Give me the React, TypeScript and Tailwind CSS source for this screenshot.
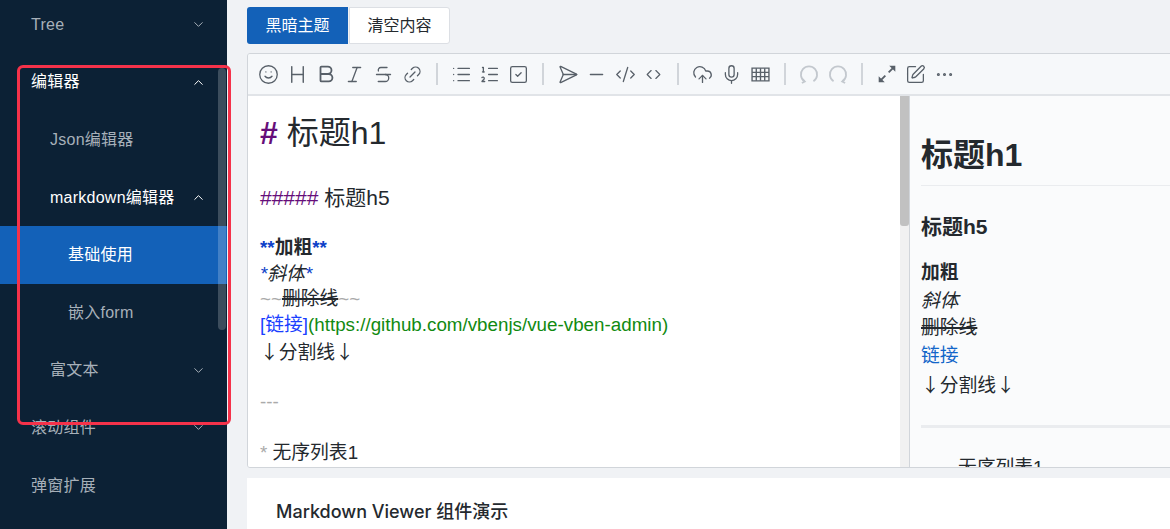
import React from 'react'
import {
  ChevronDown,
  ChevronUp,
  Smile,
  Heading,
  Bold,
  Italic,
  Strikethrough,
  Link2,
  List,
  ListOrdered,
  SquareCheck,
  Send,
  Minus,
  CodeXml,
  ChevronsLeftRight,
  CloudUpload,
  Mic,
  SquarePen,
  Ellipsis,
} from 'lucide-react'

const FONT = "font-['Liberation_Sans','Noto_Sans_CJK_SC',sans-serif]"

const menu = [
  { label: 'Tree', arrow: 'down', indent: 'pl-[31px]', tone: 'text-[#a7b0b9]' },
  { label: '编辑器', arrow: 'up', indent: 'pl-[31px]', tone: 'text-white' },
  { label: 'Json编辑器', indent: 'pl-[50px]', tone: 'text-[#a7b0b9]' },
  { label: 'markdown编辑器', arrow: 'up', indent: 'pl-[50px]', tone: 'text-white' },
  { label: '基础使用', indent: 'pl-[68px]', tone: 'text-white bg-[#1361b8]' },
  { label: '嵌入form', indent: 'pl-[68px]', tone: 'text-[#a7b0b9]' },
  { label: '富文本', arrow: 'down', indent: 'pl-[50px]', tone: 'text-[#a7b0b9]' },
  { label: '滚动组件', arrow: 'down', indent: 'pl-[31px]', tone: 'text-[#a7b0b9]' },
  { label: '弹窗扩展', indent: 'pl-[31px]', tone: 'text-[#a7b0b9]' },
]

function Arc({ flip }: { flip?: boolean }) {
  return (
    <svg width="20" height="20" viewBox="0 0 18 18" fill="none" stroke="#c3c8ce" strokeWidth="1.6" className={flip ? '-scale-x-100' : ''}>
      <path d="M5 15.5A7.3 7.3 0 1 1 13 15.5" />
      <path d="M2.8 13.5l2.4 2.2 -2.6 1.4" />
    </svg>
  )
}

function ExpandIcon() {
  return (
    <svg width="20" height="20" viewBox="0 0 18 18" fill="#586069" stroke="#586069">
      <path d="M10.5 7.5L15 3" strokeWidth="1.7" />
      <path d="M11 1.5h5.5V7z" stroke="none" />
      <path d="M7.5 10.5L3 15" strokeWidth="1.7" />
      <path d="M7 16.5H1.5V11z" stroke="none" />
    </svg>
  )
}

function TableIcon() {
  return (
    <svg width="19" height="19" viewBox="0 0 18 18" fill="none" stroke="#586069" strokeWidth="1.3">
      <path d="M1 3h16v12H1z" />
      <path d="M1 7h16M1 11h16M5 3v12M9 3v12M13 3v12" />
    </svg>
  )
}

function Tool({ children }: { children: React.ReactNode }) {
  return <div className="w-[28.8px] h-[41px] flex items-center justify-center shrink-0 text-[#586069]">{children}</div>
}

function Sep() {
  return <div className="w-[2px] h-[22px] mx-[9px] bg-[#d1d5da] shrink-0" />
}

function Toolbar() {
  const p = { size: 21, strokeWidth: 1.5 }
  return (
    <div className="h-[40px] pl-[6px] flex items-center bg-[#f6f8fa] border-b-2 border-[#e1e4e8] box-content">
      <Tool><Smile {...p} /></Tool>
      <Tool><Heading {...p} size={23} /></Tool>
      <Tool><Bold {...p} size={22} strokeWidth={2} /></Tool>
      <Tool><Italic {...p} /></Tool>
      <Tool><Strikethrough {...p} /></Tool>
      <Tool><Link2 {...p} className="-rotate-45" /></Tool>
      <Sep />
      <Tool><List {...p} /></Tool>
      <Tool><ListOrdered {...p} /></Tool>
      <Tool><SquareCheck {...p} /></Tool>
      <Sep />
      <Tool><Send {...p} className="rotate-45 -translate-x-[3px]" /></Tool>
      <Tool><Minus {...p} /></Tool>
      <Tool><CodeXml {...p} /></Tool>
      <Tool><ChevronsLeftRight {...p} size={19} /></Tool>
      <Sep />
      <Tool><CloudUpload {...p} /></Tool>
      <Tool><Mic {...p} /></Tool>
      <Tool><TableIcon /></Tool>
      <Sep />
      <Tool><Arc /></Tool>
      <Tool><Arc flip /></Tool>
      <Sep />
      <Tool><ExpandIcon /></Tool>
      <Tool><SquarePen {...p} /></Tool>
      <Tool><Ellipsis {...p} /></Tool>
    </div>
  )
}

function Arrow() {
  return <span className="font-['Noto_Sans_CJK_SC',sans-serif]">↓</span>
}

function Source() {
  return (
    <div className="w-[652px] shrink-0 bg-white pl-3 pt-[12px] text-[18.8px] leading-[25.6px] text-[#24292e] overflow-hidden">
      <div className="text-[32px] leading-[51px]"><span className="text-[#660e7a] font-bold">#</span> 标题h1</div>
      <div className="h-[25.6px]" />
      <div className="h-[25px] text-[21px]"><span className="text-[#660e7a]">#####</span> 标题h5</div>
      <div className="h-[25.6px]" />
      <div className="h-[25.6px] font-bold"><span className="text-[#0d3fc8]">**</span>加粗<span className="text-[#0d3fc8]">**</span></div>
      <div className="h-[25.6px] italic"><span className="text-[#0d3fc8]">*</span>斜体<span className="text-[#0d3fc8]">*</span></div>
      <div className="h-[25.6px]"><span className="text-[#aaaaaa]">~~</span><span className="line-through decoration-[1.5px]">删除线</span><span className="text-[#aaaaaa]">~~</span></div>
      <div className="h-[25.6px]"><span className="text-[#1a3fff]">[链接]</span><span className="text-[#118a11]">(https://github.com/vbenjs/vue-vben-admin)</span></div>
      <div className="h-[25.6px]"><Arrow />分割线<Arrow /></div>
      <div className="h-[25.6px]" />
      <div className="h-[25.6px] text-[#aaaaaa]">---</div>
      <div className="h-[25.6px]" />
      <div className="h-[25.6px]"><span className="text-[#aaaaaa]">*</span> 无序列表1</div>
    </div>
  )
}

function Preview() {
  return (
    <div className="flex-1 bg-[#fafbfc] border-l border-[#d1d5da] pl-[11px] pt-[39px] text-[18.8px] leading-[27.7px] text-[#24292e] overflow-hidden">
      <div className="text-[32px] leading-[41px] font-bold pb-[9px] border-b border-[#eaecef]">标题h1</div>
      <div className="text-[21px] leading-[26px] font-bold mt-[28px]">标题h5</div>
      <div className="mt-[19px]">
        <div className="h-[27.7px] font-bold">加粗</div>
        <div className="h-[27.7px] italic">斜体</div>
        <div className="h-[27.7px]"><span className="line-through decoration-[1.5px]">删除线</span></div>
        <div className="h-[27.7px] text-[#1366c9]">链接</div>
        <div className="h-[27.7px]"><Arrow />分割线<Arrow /></div>
      </div>
      <div className="h-[3px] bg-[#eaecef] mt-[28px]" />
      <div className="pl-[37px] mt-[26px]">无序列表1</div>
    </div>
  )
}

export default function App() {
  return (
    <div className={`${FONT} relative w-[1170px] h-[529px] overflow-hidden flex bg-[#f0f2f5]`}>
      <aside className="w-[227px] shrink-0 bg-[#0c2135] -mt-[4px]">
        {menu.map(m => (
          <div key={m.label} className={`h-[57.6px] flex items-center justify-between pr-[21px] text-[16px] tracking-[0.25px] ${m.indent} ${m.tone}`}>
            <span>{m.label}</span>
            {m.arrow === 'down' && <ChevronDown size={15} strokeWidth={1.6} />}
            {m.arrow === 'up' && <ChevronUp size={15} strokeWidth={1.6} />}
          </div>
        ))}
      </aside>

      <main className="flex-1 min-w-0 pl-[20px] pt-[7px] flex flex-col">
        <div className="flex gap-px h-[37px]">
          <button className="w-[101px] rounded-l-[3px] bg-[#1361b8] text-white text-[16px]">黑暗主题</button>
          <button className="w-[101px] rounded-r-[3px] bg-white border border-[#dcdfe4] text-[#24292e] text-[16px]">清空内容</button>
        </div>

        <div className="mt-[9px] h-[415px] -mr-2 border border-[#d1d5da] rounded-[3px] flex flex-col overflow-hidden">
          <Toolbar />
          <div className="flex flex-1 min-h-0">
            <Source />
            <div className="w-[9px] shrink-0 bg-[#f1f1f1]">
              <div className="h-[130px] bg-[#c1c1c1] rounded-b-[3px]" />
            </div>
            <Preview />
          </div>
        </div>

        <div className="mt-[10px] flex-1 bg-white pl-[29px] pt-[22px] font-['Inter','Noto_Sans_CJK_SC',sans-serif] text-[18px] leading-[24px] text-[#24292e] font-medium">
          Markdown Viewer 组件演示
        </div>
      </main>

      <div className="absolute left-[218px] top-[68px] w-[8px] h-[262px] rounded bg-white/20" />
      <div className="absolute left-[17px] top-[65px] w-[214px] h-[360px] rounded-[6px] border-[3px] border-[#f5324a]" />
    </div>
  )
}
